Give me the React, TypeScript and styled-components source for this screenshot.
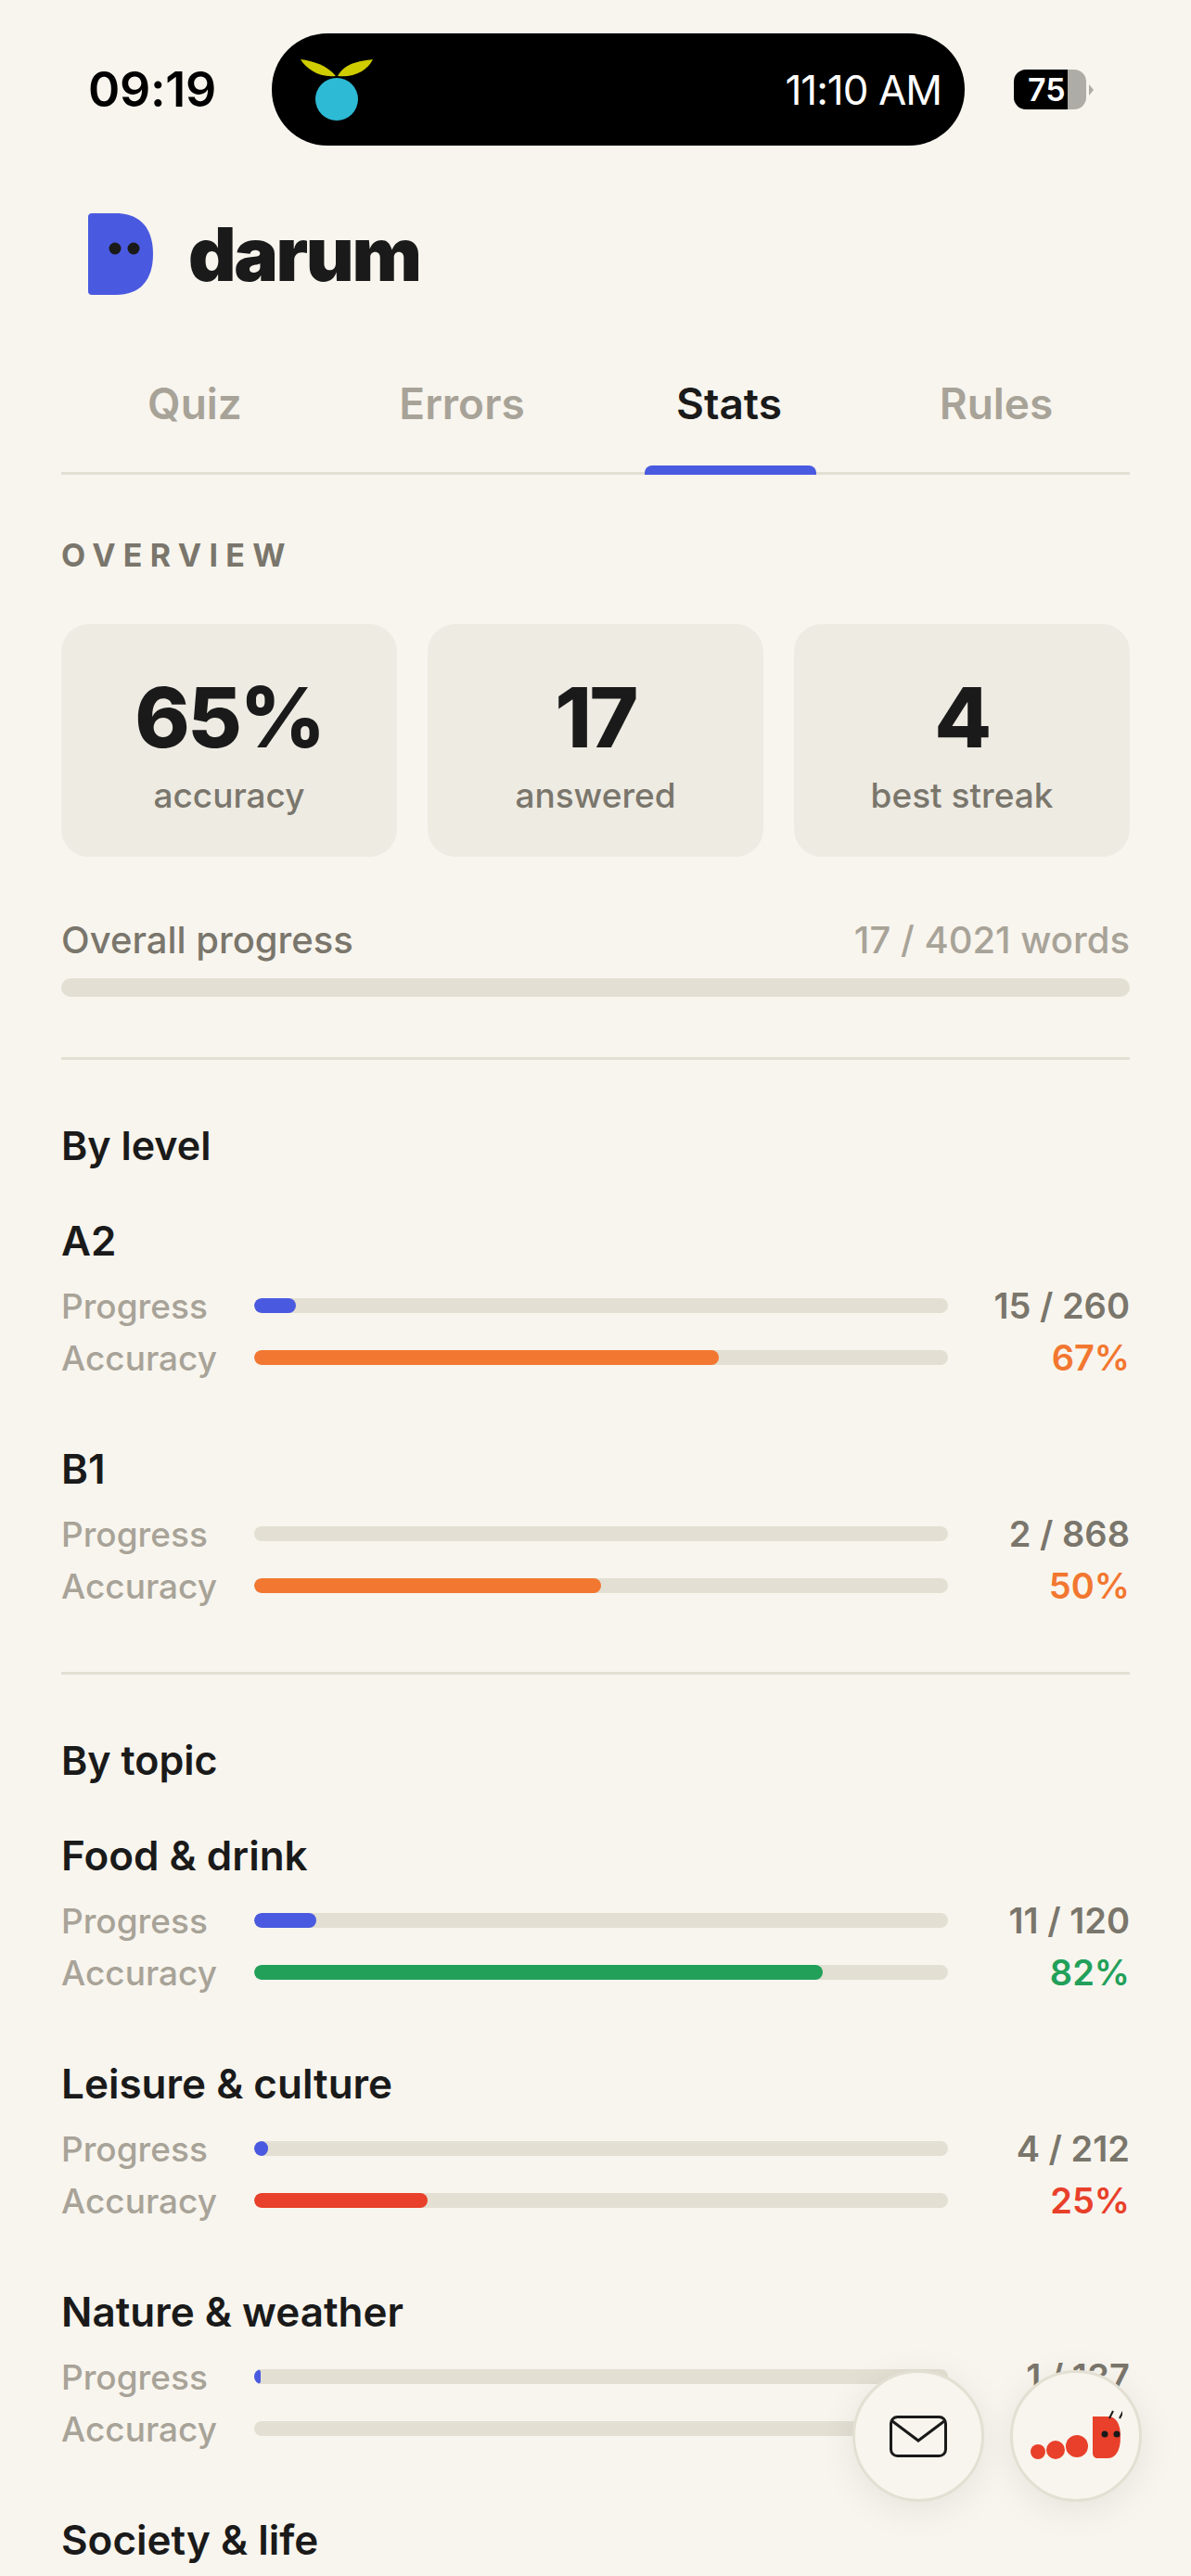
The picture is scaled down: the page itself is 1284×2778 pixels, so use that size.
import { FC } from 'react';
import styled, { createGlobalStyle } from 'styled-components';

const colors = {
  bg: '#f8f5ee',
  card: '#eeebe3',
  track: '#e3dfd3',
  ink: '#1a1a1a',
  muted: '#7a766c',
  faint: '#a8a398',
  blue: '#4a5ae0',
  orange: '#f27730',
  green: '#22a05a',
  red: '#e8402a',
};

const GlobalStyle = createGlobalStyle`
  html, body {
    margin: 0;
    padding: 0;
    background: ${colors.bg};
    font-family: Inter, "Noto Sans", sans-serif;
    color: ${colors.ink};
  }
  * { box-sizing: border-box; }
`;

type StatRow = {
  label: string;
  percent: number;
  value: string;
  tone: string;
};

type Group = {
  title: string;
  progress?: StatRow;
  accuracy?: StatRow;
};

const makeGroup = (
  title: string,
  done: string,
  progress: number,
  accuracy: number,
  tone: string
): Group => ({
  title,
  progress: { label: 'Progress', percent: progress, value: done, tone: colors.muted },
  accuracy: { label: 'Accuracy', percent: accuracy, value: `${accuracy}%`, tone },
});

const levels: Group[] = [
  makeGroup('A2', '15 / 260', 6, 67, colors.orange),
  makeGroup('B1', '2 / 868', 0, 50, colors.orange),
];

const topics: Group[] = [
  makeGroup('Food & drink', '11 / 120', 9, 82, colors.green),
  makeGroup('Leisure & culture', '4 / 212', 2, 25, colors.red),
  makeGroup('Nature & weather', '1 / 137', 0.9, 0, colors.muted),
  { title: 'Society & life' },
];

const fillColor = (row: StatRow) =>
  row.label === 'Progress' ? colors.blue : row.tone;

const Rows: FC<{ row: StatRow }> = ({ row }) => (
  <Row>
    <RowLabel>{row.label}</RowLabel>
    <Track>
      {row.percent > 0 && (
        <Fill $color={fillColor(row)} style={{ width: `${row.percent}%` }} />
      )}
    </Track>
    <RowValue $color={row.tone}>{row.value}</RowValue>
  </Row>
);

const GroupBlock: FC<{ group: Group }> = ({ group }) => (
  <GroupWrap>
    <GroupTitle>{group.title}</GroupTitle>
    {group.progress && <Rows row={group.progress} />}
    {group.accuracy && <Rows row={group.accuracy} />}
  </GroupWrap>
);

const App: FC = () => (
  <Page>
    <GlobalStyle />
    <StatusBar>
      <Clock>09:19</Clock>
      <Island>
        <svg width="78" height="66" viewBox="0 0 78 66">
          <path d="M38 18C28 6 14 2 0 0C6 10 20 20 38 18Z" fill="#cfcc00" />
          <path d="M40 18C48 4 62 2 78 0C72 12 58 20 40 18Z" fill="#cfcc00" />
          <circle cx="39" cy="43" r="23" fill="#2dbad5" />
        </svg>
        <IslandTime>11:10 AM</IslandTime>
      </Island>
      <Battery>
        <BatteryBody>
          <BatteryLevel>75</BatteryLevel>
        </BatteryBody>
        <BatteryNub />
      </Battery>
    </StatusBar>

    <Brand>
      <svg width="70" height="88" viewBox="0 0 70 88">
        <path
          d="M4 0H30C56 0 70 16 70 44C70 72 56 88 30 88H4C1.5 88 0 86.500 0 84V4C0 1.500 1.500 0 4 0Z"
          fill={colors.blue}
        />
        <circle cx="29" cy="38" r="6.500" fill={colors.ink} />
        <circle cx="49" cy="38" r="6.500" fill={colors.ink} />
      </svg>
      <Wordmark>darum</Wordmark>
    </Brand>

    <Tabs>
      <Tab>Quiz</Tab>
      <Tab>Errors</Tab>
      <Tab $active>Stats</Tab>
      <Tab>Rules</Tab>
    </Tabs>

    <Overline>OVERVIEW</Overline>
    <Cards>
      <Card>
        <CardValue>65%</CardValue>
        <CardLabel>accuracy</CardLabel>
      </Card>
      <Card>
        <CardValue>17</CardValue>
        <CardLabel>answered</CardLabel>
      </Card>
      <Card>
        <CardValue>4</CardValue>
        <CardLabel>best streak</CardLabel>
      </Card>
    </Cards>

    <OverallHead>
      <span>Overall progress</span>
      <OverallCount>17 / 4021 words</OverallCount>
    </OverallHead>
    <OverallTrack />

    <Divider />
    <SectionTitle>By level</SectionTitle>
    {levels.map((group) => (
      <GroupBlock key={group.title} group={group} />
    ))}

    <Divider />
    <SectionTitle>By topic</SectionTitle>
    {topics.map((group) => (
      <GroupBlock key={group.title} group={group} />
    ))}

    <Floating>
      <RoundButton>
        <svg width="62" height="45" viewBox="0 0 62 45" fill="none">
          <rect x="1.500" y="1.500" width="59" height="42" rx="7" stroke={colors.ink} strokeWidth="3" />
          <path d="M3 6L31 27L59 6" stroke={colors.ink} strokeWidth="3" />
        </svg>
      </RoundButton>
      <RoundButton>
        <svg width="100" height="56" viewBox="0 0 100 56">
          <circle cx="9" cy="45" r="8" fill={colors.red} />
          <circle cx="28" cy="43" r="10" fill={colors.red} />
          <circle cx="51" cy="39" r="12" fill={colors.red} />
          <path
            d="M68 7H84C93 7 98 14 98 29C98 45 92 52 84 52H74C70 52 68 50 68 46Z"
            fill={colors.red}
          />
          <circle cx="81" cy="26" r="3.500" fill={colors.ink} />
          <circle cx="94" cy="26" r="3.500" fill={colors.ink} />
          <path d="M86 9L90 1M97 9L101 1" stroke={colors.ink} strokeWidth="2" />
        </svg>
      </RoundButton>
    </Floating>
  </Page>
);

const Page = styled.div`
  height: 100vh;
  overflow: hidden;
  padding: 36px 66px 0;
  background: ${colors.bg};
`;

const StatusBar = styled.div`
  display: flex;
  align-items: center;
  height: 121px;
  margin-bottom: 73px;
`;

const Clock = styled.div`
  width: 227px;
  padding-left: 29px;
  font-size: 52px;
  font-weight: 600;
  letter-spacing: -0.3px;
  color: #000;
`;

const Island = styled.div`
  width: 747px;
  height: 121px;
  border-radius: 60px;
  background: #000;
  display: flex;
  align-items: center;
  justify-content: space-between;
  padding: 0 25px 0 31px;
`;

const IslandTime = styled.div`
  color: #fff;
  font-size: 44px;
  font-weight: 400;
  letter-spacing: -1px;
`;

const Battery = styled.div`
  display: flex;
  align-items: center;
  margin-left: 53px;
`;

const BatteryBody = styled.div`
  width: 78px;
  height: 43px;
  border-radius: 13px;
  overflow: hidden;
  background: linear-gradient(to right, #000 58px, #aeaca6 58px);
`;

const BatteryLevel = styled.div`
  width: 58px;
  padding-left: 15px;
  overflow: hidden;
  white-space: nowrap;
  color: #fff;
  font-size: 34px;
  line-height: 43px;
  font-weight: 600;
`;

const BatteryNub = styled.div`
  width: 0;
  height: 0;
  margin-left: 3px;
  border-top: 6px solid transparent;
  border-bottom: 6px solid transparent;
  border-left: 5px solid #aeaca6;
`;

const Brand = styled.div`
  display: flex;
  align-items: center;
  gap: 38px;
  height: 88px;
  padding-left: 29px;
  margin-bottom: 66px;
`;

const Wordmark = styled.div`
  font-size: 80px;
  font-weight: 900;
  letter-spacing: -2.400px;
  line-height: 84px;
`;

const Tabs = styled.div`
  display: grid;
  grid-template-columns: repeat(4, 1fr);
  border-bottom: 3px solid ${colors.track};
  height: 128px;
  padding-top: 16px;
`;

const Tab = styled.div<{ $active?: boolean }>`
  position: relative;
  text-align: center;
  font-size: 46px;
  font-weight: 600;
  line-height: 70px;
  color: ${(p) => (p.$active ? colors.ink : colors.faint)};

  ${(p) =>
    p.$active &&
    `
    &::after {
      content: '';
      position: absolute;
      left: 53px;
      bottom: -3px;
      width: 185px;
      height: 10px;
      border-radius: 8px 8px 0 0;
      background: ${colors.blue};
    }
  `}
`;

const Overline = styled.div`
  margin-top: 67px;
  font-size: 34px;
  line-height: 40px;
  font-weight: 700;
  letter-spacing: 8.300px;
  color: ${colors.muted};
`;

const Cards = styled.div`
  display: grid;
  grid-template-columns: repeat(3, 1fr);
  gap: 33px;
  margin-top: 54px;
`;

const Card = styled.div`
  height: 251px;
  border-radius: 30px;
  background: ${colors.card};
  display: flex;
  flex-direction: column;
  align-items: center;
  padding-top: 46px;
`;

const CardValue = styled.div`
  font-size: 90px;
  line-height: 110px;
  font-weight: 800;
  letter-spacing: -2.500px;
`;

const CardLabel = styled.div`
  margin-top: 7px;
  font-size: 37px;
  line-height: 44px;
  font-weight: 500;
  color: ${colors.muted};
`;

const OverallHead = styled.div`
  display: flex;
  justify-content: space-between;
  margin-top: 67px;
  font-size: 40px;
  line-height: 46px;
  font-weight: 500;
  color: ${colors.muted};
`;

const OverallCount = styled.span`
  color: ${colors.faint};
`;

const OverallTrack = styled.div`
  height: 20px;
  margin-top: 18px;
  border-radius: 10px;
  background: ${colors.track};
`;

const Divider = styled.div`
  height: 3px;
  margin-top: 65px;
  background: ${colors.track};
`;

const SectionTitle = styled.div`
  margin-top: 69px;
  font-size: 43px;
  line-height: 46px;
  font-weight: 600;
`;

const GroupWrap = styled.div`
  margin-top: 57px;

  & + & {
    margin-top: 69px;
  }
`;

const GroupTitle = styled.div`
  margin-bottom: 19px;
  font-size: 44px;
  line-height: 46px;
  font-weight: 600;
`;

const Row = styled.div`
  display: flex;
  align-items: center;
  height: 56px;
`;

const RowLabel = styled.div`
  width: 208px;
  flex: none;
  font-size: 37px;
  font-weight: 500;
  color: ${colors.faint};
`;

const Track = styled.div`
  flex: 1;
  height: 16px;
  border-radius: 8px;
  background: ${colors.track};
  overflow: hidden;
`;

const Fill = styled.div<{ $color: string }>`
  height: 100%;
  border-radius: 8px;
  background: ${(p) => p.$color};
`;

const RowValue = styled.div<{ $color: string }>`
  width: 196px;
  flex: none;
  text-align: right;
  font-size: 38px;
  font-weight: 600;
  color: ${(p) => p.$color};
`;

const Floating = styled.div`
  position: fixed;
  right: 53px;
  bottom: 80px;
  display: flex;
  gap: 28px;
`;

const RoundButton = styled.div`
  width: 142px;
  height: 142px;
  border-radius: 50%;
  border: 3px solid ${colors.track};
  background: ${colors.bg};
  box-shadow: 0 8px 40px rgba(0, 0, 0, 0.08);
  display: flex;
  align-items: center;
  justify-content: center;
`;

export default App;
